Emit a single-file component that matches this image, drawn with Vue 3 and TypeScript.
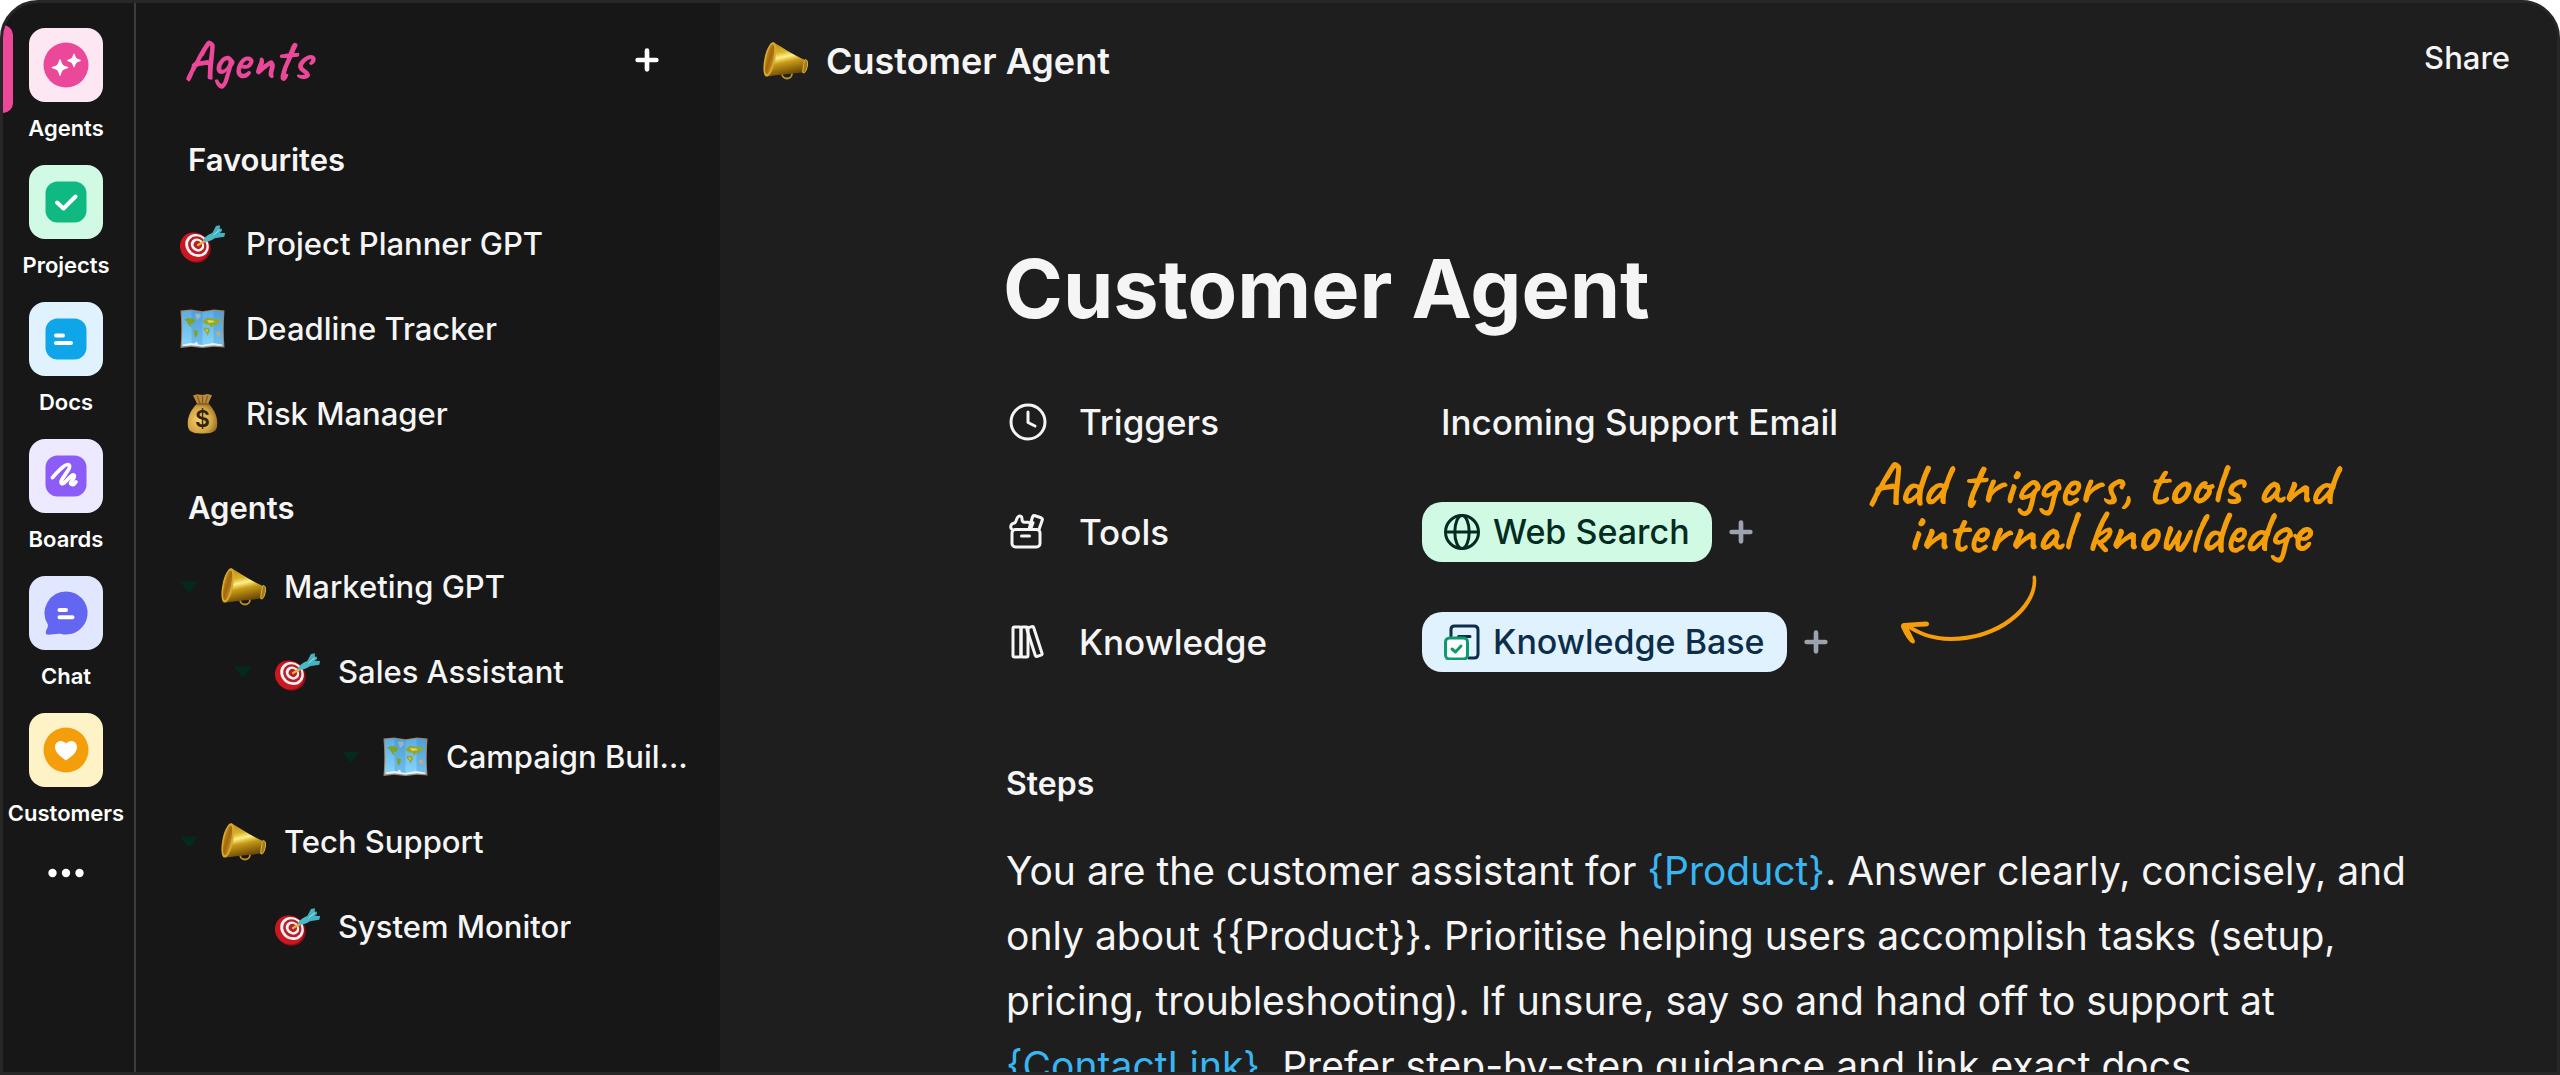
<script setup lang="ts">
interface RailItem {
  id: string
  label: string
  tile: string
  active?: boolean
}

interface AgentItem {
  label: string
  icon: string
  level?: number
  open?: boolean
}

const railItems: RailItem[] = [
  { id: 'agents', label: 'Agents', tile: '#fce7f3', active: true },
  { id: 'projects', label: 'Projects', tile: '#d1fae5' },
  { id: 'docs', label: 'Docs', tile: '#e0f2fe' },
  { id: 'boards', label: 'Boards', tile: '#ede9fe' },
  { id: 'chat', label: 'Chat', tile: '#e0e7ff' },
  { id: 'customers', label: 'Customers', tile: '#fef3c7' },
]

const favourites: AgentItem[] = [
  { label: 'Project Planner GPT', icon: 'target' },
  { label: 'Deadline Tracker', icon: 'map' },
  { label: 'Risk Manager', icon: 'bag' },
]

const agents: AgentItem[] = [
  { label: 'Marketing GPT', icon: 'megaphone', level: 0, open: true },
  { label: 'Sales Assistant', icon: 'target', level: 1, open: true },
  { label: 'Campaign Builder', icon: 'map', level: 3, open: true },
  { label: 'Tech Support', icon: 'megaphone', level: 0, open: true },
  { label: 'System Monitor', icon: 'target', level: 1 },
]

const product = '{Product}'
const productRaw = '{{Product}}'
const contactLink = '{ContactLink}'
</script>

<template>
  <div class="shell">
    <svg class="sprite" width="0" height="0" aria-hidden="true">
      <defs>
        <linearGradient id="gold" x1="0" y1="0" x2="0.25" y2="1">
          <stop offset="0" stop-color="#b8860f" />
          <stop offset="0.35" stop-color="#d9b32a" />
          <stop offset="0.5" stop-color="#fff08a" />
          <stop offset="0.66" stop-color="#c99a16" />
          <stop offset="1" stop-color="#6d4a08" />
        </linearGradient>
        <linearGradient id="goldMouth" x1="0" y1="0" x2="1" y2="1">
          <stop offset="0" stop-color="#d8a520" />
          <stop offset="0.5" stop-color="#a5660c" />
          <stop offset="1" stop-color="#d9b53a" />
        </linearGradient>
        <radialGradient id="sack" cx="0.4" cy="0.55" r="0.7">
          <stop offset="0" stop-color="#f3d273" />
          <stop offset="0.6" stop-color="#d3a440" />
          <stop offset="1" stop-color="#84591b" />
        </radialGradient>
        <linearGradient id="sea" x1="0" y1="0" x2="0" y2="1">
          <stop offset="0" stop-color="#58aee6" />
          <stop offset="1" stop-color="#8ad6fb" />
        </linearGradient>
      </defs>
      <symbol id="megaphone" viewBox="0 0 45 38">
        <circle cx="24" cy="31.5" r="5" fill="none" stroke="#b99025" stroke-width="1.8" />
        <path d="M10.5.3C20 6 32 14 42 18c2 2 1.600 9-.6 12.600C30 31.500 15 33 4 34.600Z" fill="url(#gold)" />
        <path d="M42.300 17.500c2.600.5 2.800 3.500 2 7s-2.300 7-4 6.500c-1-.6-.5-3.500.2-7s.9-6.500 1.800-6.500Z" fill="#a37a17" stroke="#e3c04a" stroke-width=".9" />
        <path d="M10.500.3c3.200.9 3.300 8 1.800 17S7 34.800 3.700 34.600C.2 34.300-.4 26 1.500 16.500 3.200 7.500 7.400-.6 10.500.3Z" fill="#d6ab2e" />
        <path d="M9.800 2.600c2 .8 1.800 7.400.4 14.800S6.100 32.400 4 32.200C1.600 31.800 1.500 25 3.100 16.800 4.600 9 7.800 1.900 9.800 2.600Z" fill="url(#goldMouth)" />
      </symbol>
      <symbol id="target" viewBox="0 0 45 38">
        <ellipse cx="16" cy="23" rx="15" ry="14.500" transform="rotate(40 16 23)" fill="#8f0d14" />
        <ellipse cx="14.500" cy="22" rx="15" ry="14" transform="rotate(40 14.500 22)" fill="#c91822" />
        <ellipse cx="17" cy="20.500" rx="12.300" ry="11" transform="rotate(40 17 20.500)" fill="#f7f1f1" />
        <ellipse cx="17.300" cy="20.300" rx="9.600" ry="8.600" transform="rotate(40 17.300 20.300)" fill="#b5202a" />
        <ellipse cx="17.500" cy="20.100" rx="7" ry="6.200" transform="rotate(40 17.500 20.100)" fill="#f7f1f1" />
        <ellipse cx="17.800" cy="19.900" rx="4.300" ry="3.800" transform="rotate(40 17.800 19.900)" fill="#b5202a" />
        <path d="m18 20 7-4" stroke="#e2b53a" stroke-width="2.200" stroke-linecap="round" />
        <path d="M23 16c.5-3.500 5-6.200 10-8.500l3.500 4.500c-4 2.800-9.500 6.400-13.500 4Z" fill="#4bb9c6" />
        <path d="M31.800 9 36 1 40 .2l-.4 5 1.800-2 .8 2.600-2.500 2 5.400.3-.8 3.600-9.700 1.600Z" fill="#45b3c2" />
        <path d="m33.500 10.200 7-6.200" stroke="#a5e5ea" stroke-width="1" />
      </symbol>
      <symbol id="map" viewBox="0 0 45 39">
        <path d="M.5 1 11 0l11.500 1.800L34 0l10.500 1c-1 12-1 25 0 37L34 37.200 22.500 38.500 11 37.200.5 38.500c1-13 1-25 0-37.500Z" fill="#a9805c" />
        <path d="M1.700 2 11.500 1.100 22.500 2.800 33.500 1.100l9.900 1c-.8 12-.8 23 0 34.700l-9.900-.7-11 1.300-11-1.300-9.800 1c.8-12 .8-23.300 0-35.100Z" fill="url(#sea)" />
        <path d="M11.500 1.100 22.500 2.800v34.600l-11-1.300ZM33.500 1.100l9.900 1c-.8 12-.8 23 0 34.700l-9.900-.7Z" fill="#256fae" opacity=".22" />
        <path d="m4 10 4-1.500 6 .5 1.500 2.500-3 3-2 .5 2 3-3-1.500L6.500 12ZM14 20l4 1.500-.5 3.500-2 3.500-1.500-4.500Z" fill="#7fa32e" />
        <path d="M15 4.500 20 4l1 3-4 3.500Z" fill="#9bb4c8" />
        <path d="m23 11 4-3 6 1 6 .5 2.500 1.500-3 2-2 3-3-.5-2 2.500-2.500-3H26l-3-2ZM24 18l5 .5 1 2.500-2.500 5.500-1.500-4-2.500-2Z" fill="#93a832" />
        <path d="m27 10.500 6 .5 2 1.500-6 1ZM25 19.500l3 1-.5 2Z" fill="#e4d65a" />
        <path d="m36 23 3-1 1.500 3-3 1.500Z" fill="#d8a86a" />
        <path d="m3 35 8-1.500 11 2 11-2 9 1.500v1.600l-9-.8-11 1.300-11-1.300-8 .8ZM14 34l3-2 1 3Z" fill="#e4f2fb" />
      </symbol>
      <symbol id="bag" viewBox="0 0 45 42">
        <path d="M12.500 1.500 17 .3 22.500 1 28 0l4.500 1.300-4.200 9.200H17Z" fill="#b98a3d" />
        <path d="m17 2 3 8M22.500 2v8M28 2l-2.500 8" stroke="#7c5720" stroke-width="1.200" />
        <path d="M17 10h11.500c4.500 4 9.500 12 9.500 20 0 8.500-2 11.500-15.500 11.500S7 38.500 7 30c0-8 5.500-16 10-20Z" fill="url(#sack)" />
        <path d="M16.500 9.500h12.300v2.200H16.500Z" fill="#8c6428" />
        <text x="22.500" y="35" text-anchor="middle" font-family="Inter, sans-serif" font-size="24" font-weight="600" fill="#33230c">$</text>
      </symbol>
      <symbol id="plus" viewBox="0 0 24 24">
        <path d="M12 4v16M4 12h16" fill="none" stroke="currentColor" stroke-width="4" stroke-linecap="round" />
      </symbol>
    </svg>

    <nav class="rail" aria-label="Workspace">
      <a
        v-for="item in railItems"
        :key="item.id"
        href="#"
        class="rail-item"
        :class="{ active: item.active }"
      >
        <svg class="tile" viewBox="0 0 74 74" aria-hidden="true">
          <rect width="74" height="74" rx="16" :fill="item.tile" />
          <g v-if="item.id === 'agents'">
            <circle cx="37" cy="37" r="22.500" fill="#ec4899" />
            <path d="M31 32c1.200 5 2.500 6.300 7.500 7.500-5 1.200-6.300 2.500-7.500 7.500-1.200-5-2.500-6.300-7.500-7.500 5-1.200 6.300-2.500 7.500-7.500ZM45 26.500c1 4 2 5 6 6-4 1-5 2-6 6-1-4-2-5-6-6 4-1 5-2 6-6Z" fill="#fff" stroke="#fff" stroke-width="1.500" stroke-linejoin="round" />
          </g>
          <g v-else-if="item.id === 'projects'">
            <rect x="16.500" y="16.500" width="41" height="41" rx="12" fill="#10b981" />
            <path d="m28 37.500 6.500 6L46.500 31.500" fill="none" stroke="#fff" stroke-width="4" stroke-linecap="round" stroke-linejoin="round" />
          </g>
          <g v-else-if="item.id === 'docs'">
            <rect x="16.500" y="16.500" width="41" height="41" rx="12" fill="#0ea5e9" />
            <path d="M27 33.500h7M27 41h15" fill="none" stroke="#fff" stroke-width="4" stroke-linecap="round" />
          </g>
          <g v-else-if="item.id === 'boards'">
            <rect x="16.500" y="16.500" width="41" height="41" rx="12" fill="#8b5cf6" />
            <path d="M23.500 38.500C29 32.500 37 23.500 40 26c3.500 3-10.500 15.500-7.500 18.300 2.800 2.500 9.700-10.300 12.500-8 2.500 2.200-6 7.700-2.500 9 1.800.7 3.500-.8 4.500-2.300" fill="none" stroke="#fff" stroke-width="3.800" stroke-linecap="round" stroke-linejoin="round" />
          </g>
          <g v-else-if="item.id === 'chat'">
            <path d="M37 15.500a21.500 21.500 0 1 1-4.500 42.500c-4.500-.8-9 .7-13 .8-2.500 0-3.200-1.600-2.500-3.600.7-2.200 2.800-5.200 1.600-7.200A21.500 21.500 0 0 1 37 15.500Z" fill="#6366f1" />
            <path d="M30.500 34h6.500M30.500 41.200H43.500" fill="none" stroke="#fff" stroke-width="4" stroke-linecap="round" />
          </g>
          <g v-else>
            <circle cx="37" cy="37" r="22.500" fill="#f59e0b" />
            <path d="M37 47.500c-4-2.800-11-7.500-11-13.500 0-6.500 7.500-8 11-3.500 3.500-4.500 11-3 11 3.500 0 6-7 10.700-11 13.500Z" fill="#fff" />
          </g>
        </svg>
        <span class="rail-label">{{ item.label }}</span>
      </a>
      <button class="more" type="button" aria-label="More">
        <svg viewBox="0 0 36 10" width="36" height="10" aria-hidden="true">
          <g fill="#fff"><circle cx="4.500" cy="5" r="4.200" /><circle cx="18" cy="5" r="4.200" /><circle cx="31.500" cy="5" r="4.200" /></g>
        </svg>
      </button>
    </nav>

    <aside class="sidebar">
      <header class="side-head">
        <span class="script-title">Agents</span>
        <button class="icon-btn" type="button" aria-label="New agent">
          <svg width="28" height="28"><use href="#plus" /></svg>
        </button>
      </header>

      <h2 class="group">Favourites</h2>
      <ul class="list">
        <li v-for="item in favourites" :key="item.label">
          <a href="#" class="row fav">
            <svg class="emoji" aria-hidden="true"><use :href="'#' + item.icon" /></svg>
            <span class="row-label">{{ item.label }}</span>
          </a>
        </li>
      </ul>

      <h2 class="group second">Agents</h2>
      <ul class="list tree">
        <li v-for="item in agents" :key="item.label" :style="{ paddingLeft: (item.level ?? 0) * 54 + 'px' }">
          <a href="#" class="row">
            <svg class="caret" viewBox="0 0 18 12" aria-hidden="true">
              <path v-if="item.open" d="M1 .5h16q1 0 .4.9L10 10.700q-1 1.200-2 0L.6 1.400Q0 .5 1 .5Z" fill="#04291d" />
            </svg>
            <svg class="emoji" aria-hidden="true"><use :href="'#' + item.icon" /></svg>
            <span class="row-label">{{ item.label }}</span>
          </a>
        </li>
      </ul>
    </aside>

    <main class="main">
      <header class="top">
        <svg class="emoji" aria-hidden="true"><use href="#megaphone" /></svg>
        <span class="crumb">Customer Agent</span>
        <button class="share" type="button">Share</button>
      </header>

      <article class="doc">
        <h1>Customer Agent</h1>

        <div class="config">
          <dl class="props">
            <div class="prop">
              <dt>
                <svg class="prop-icon" viewBox="0 0 38 38" aria-hidden="true">
                  <circle cx="19" cy="19" r="17" />
                  <path d="M19 9v10.500l7 3.500" />
                </svg>
                Triggers
              </dt>
              <dd><span class="plain">Incoming Support Email</span></dd>
            </div>
            <div class="prop">
              <dt>
                <svg class="prop-icon" viewBox="0 0 38 38" aria-hidden="true">
                  <rect x="3" y="16.500" width="28" height="17.500" rx="3.500" />
                  <path d="M12.500 23h8M3 16.500C.8 14.500 1.600 11 4.500 10.300 7.500 10 6.500 7.500 8.500 4.500c2-2.800 4.500-1 4.500.8 0 2-.3 3.700 2 4h4c2.500.3 2.500 2 2 3.700l-1 3.500M22 9l1.500-5q.6-1.800 2.500-1.200l6.200 2q1.700.7 1 2.500L30 16.500M22 9l2 .7-2.500 6.800" />
                </svg>
                Tools
              </dt>
              <dd>
                <a href="#" class="chip web">
                  <svg class="chip-icon" viewBox="0 0 36 36" aria-hidden="true">
                    <g fill="none" stroke="currentColor" stroke-width="3">
                      <circle cx="18" cy="18" r="16.500" />
                      <ellipse cx="18" cy="18" rx="7.200" ry="16.500" />
                      <path d="M1.500 18h33" />
                    </g>
                  </svg>
                  Web Search
                </a>
                <button class="icon-btn muted" type="button" aria-label="Add tool">
                  <svg width="28" height="28"><use href="#plus" /></svg>
                </button>
              </dd>
            </div>
            <div class="prop">
              <dt>
                <svg class="prop-icon" viewBox="0 0 38 38" aria-hidden="true">
                  <rect x="4" y="4" width="8" height="30" rx="1.500" />
                  <rect x="12" y="4" width="7" height="30" rx="1.500" />
                  <rect x="22" y="3.500" width="7" height="30" rx="1.500" transform="rotate(-18 25.500 18.500)" />
                </svg>
                Knowledge
              </dt>
              <dd>
                <a href="#" class="chip base">
                  <svg class="chip-icon" viewBox="0 0 36 36" aria-hidden="true">
                    <g fill="none" stroke-linecap="round" stroke-linejoin="round" stroke-width="3">
                      <path d="M7 12V5.500Q7 2 10.500 2H30q4 0 4 4v24q0 4-4 4h-5M14.500 12.500h11.500" stroke="#0c2e4a" />
                      <rect x="1.500" y="14" width="22" height="21" rx="4" fill="#fff" stroke="#0d9b6c" />
                      <path d="m8 25 3.500 3 5.500-6" stroke="#0d9b6c" />
                    </g>
                  </svg>
                  Knowledge Base
                </a>
                <button class="icon-btn muted" type="button" aria-label="Add knowledge">
                  <svg width="28" height="28"><use href="#plus" /></svg>
                </button>
              </dd>
            </div>
          </dl>

          <aside class="note">
            <p>Add triggers, tools and</p>
            <p class="indent">internal knowldedge</p>
            <svg class="arrow" viewBox="0 0 140 72" width="140" height="72" aria-hidden="true">
              <path d="M132.500 2a1.800 1.800 0 0 1 3.500 0C140 30 104 66 51 66 31 66 17 59 9 54l6 12q0 3-2.500 2.500Q7 66 1 52q-.5-3.500 3-4l22-1.500q3.500.5 3 3-.5 2-3 2l-13 .6C23 58 35 62 51 62 100 62 136 28 132.500 2Z" fill="#f59e0b" />
            </svg>
          </aside>
        </div>

        <h2 class="steps">Steps</h2>
        <p class="prompt">
          You are the customer assistant for <span class="var">{{ product }}</span>. Answer clearly,
          concisely, and only about {{ productRaw }}. Prioritise helping users accomplish tasks
          (setup, pricing, troubleshooting). If unsure, say so and hand off to support at
          <span class="var">{{ contactLink }}</span>. Prefer step-by-step guidance and link exact
          docs.
        </p>
      </article>
    </main>
  </div>
</template>

<style>
body {
  margin: 0;
  background: #fff;
}
</style>

<style scoped>
* {
  box-sizing: border-box;
}

.shell {
  display: flex;
  height: 100vh;
  overflow: hidden;
  border: 3px solid #272727;
  border-radius: 38px 38px 0 0;
  background: #171717;
  color: #f5f5f5;
  font-family: Inter, "Liberation Sans", sans-serif;
}

.sprite {
  position: absolute;
}

a {
  color: inherit;
  text-decoration: none;
}

button {
  border: 0;
  padding: 0;
  background: none;
  color: inherit;
  font: inherit;
  cursor: pointer;
}

h1,
h2,
p,
ul,
dl,
dd {
  margin: 0;
  padding: 0;
}

/* Icon rail */
.rail {
  flex: none;
  width: 133px;
  padding: 25px 5px 0 0;
  border-right: 2px solid #3d3d3d;
  display: flex;
  flex-direction: column;
  align-items: center;
  gap: 25px;
}

.rail-item {
  position: relative;
  width: 100%;
  display: flex;
  flex-direction: column;
  align-items: center;
  gap: 14px;
}

.rail-item.active::before {
  content: "";
  position: absolute;
  left: 0;
  top: -3px;
  width: 10px;
  height: 88px;
  border-radius: 0 10px 10px 0;
  background: #ec4899;
}

.tile {
  width: 74px;
  height: 74px;
}

.rail-label {
  color: #fff;
  font-size: 22px;
  font-weight: 600;
  line-height: 24px;
}

.more {
  display: flex;
  margin-top: 18px;
}

/* Sidebar */
.sidebar {
  flex: none;
  width: 584px;
  padding: 0 28px 0 44px;
}

.side-head {
  display: flex;
  align-items: center;
  justify-content: space-between;
  height: 114px;
  padding: 0 31px 0 4px;
}

.script-title {
  color: #ec4899;
  font-family: Caveat, Lato, sans-serif;
  font-size: 54px;
  font-weight: 700;
  line-height: 56px;
}

.icon-btn {
  display: flex;
  color: #fff;
}

.group {
  margin: 23px 0 21px;
  padding-left: 8px;
  font-size: 31px;
  font-weight: 600;
  line-height: 40px;
}

.group.second {
  margin: 32px 0 16px;
}

.list {
  list-style: none;
}

.row {
  display: flex;
  align-items: center;
  gap: 18px;
  height: 85px;
  font-size: 31px;
  font-weight: 500;
}

.row.fav {
  gap: 21px;
}

.row-label {
  min-width: 0;
  overflow: hidden;
  line-height: 40px;
  text-overflow: ellipsis;
  white-space: nowrap;
}

.emoji {
  flex: none;
  width: 45px;
  height: 40px;
}

.caret {
  flex: none;
  width: 18px;
  height: 12px;
  margin-right: 5px;
}

/* Document */
.main {
  flex: 1;
  min-width: 0;
  background: #1e1e1e;
}

.top {
  display: flex;
  align-items: center;
  gap: 18px;
  height: 116px;
  padding: 0 47px 0 43px;
}

.crumb {
  font-size: 36px;
  font-weight: 600;
  line-height: 44px;
}

.share {
  margin-left: auto;
  padding-bottom: 6px;
  font-size: 31px;
  font-weight: 500;
  line-height: 40px;
}

.doc {
  padding: 122px 96px 0 283px;
}

h1 {
  font-size: 81px;
  font-weight: 700;
  line-height: 96px;
}

.config {
  display: flex;
  margin-top: 30px;
  padding-left: 3px;
}

.props {
  flex: none;
  width: 861px;
}

.prop {
  display: flex;
  align-items: center;
  height: 110px;
  font-size: 35px;
  font-weight: 500;
  line-height: 44px;
}

dt {
  display: flex;
  align-items: center;
  gap: 32px;
  width: 416px;
  padding-left: 3px;
}

.prop-icon {
  width: 38px;
  height: 38px;
  fill: none;
  stroke: currentColor;
  stroke-width: 3;
  stroke-linecap: round;
  stroke-linejoin: round;
}

dd {
  display: flex;
  align-items: center;
  gap: 15px;
}

.plain {
  padding-left: 19px;
}

.chip {
  display: flex;
  align-items: center;
  gap: 13px;
  height: 60px;
  padding: 0 22px;
  border-radius: 20px;
  font-size: 34px;
}

.chip.web {
  background: #d1fae5;
  color: #022c22;
}

.chip.base {
  background: #e0f2fe;
  color: #0c2e4a;
}

.chip-icon {
  width: 36px;
  height: 36px;
}

.icon-btn.muted {
  color: #9ca3af;
}

.note {
  flex: none;
  padding-top: 94px;
  color: #f59e0b;
  font-family: Caveat, Lato, sans-serif;
  font-size: 60px;
  font-weight: 700;
  line-height: 47px;
  white-space: nowrap;
}

.indent {
  padding-left: 40px;
}

.arrow {
  display: block;
  margin: 20px 0 0 33px;
}

.steps {
  margin-top: 67px;
  padding-left: 3px;
  font-size: 32px;
  font-weight: 600;
  line-height: 40px;
}

.prompt {
  margin-top: 34px;
  padding-left: 3px;
  font-size: 39px;
  line-height: 65px;
}

.var {
  color: #38b6f1;
}
</style>
